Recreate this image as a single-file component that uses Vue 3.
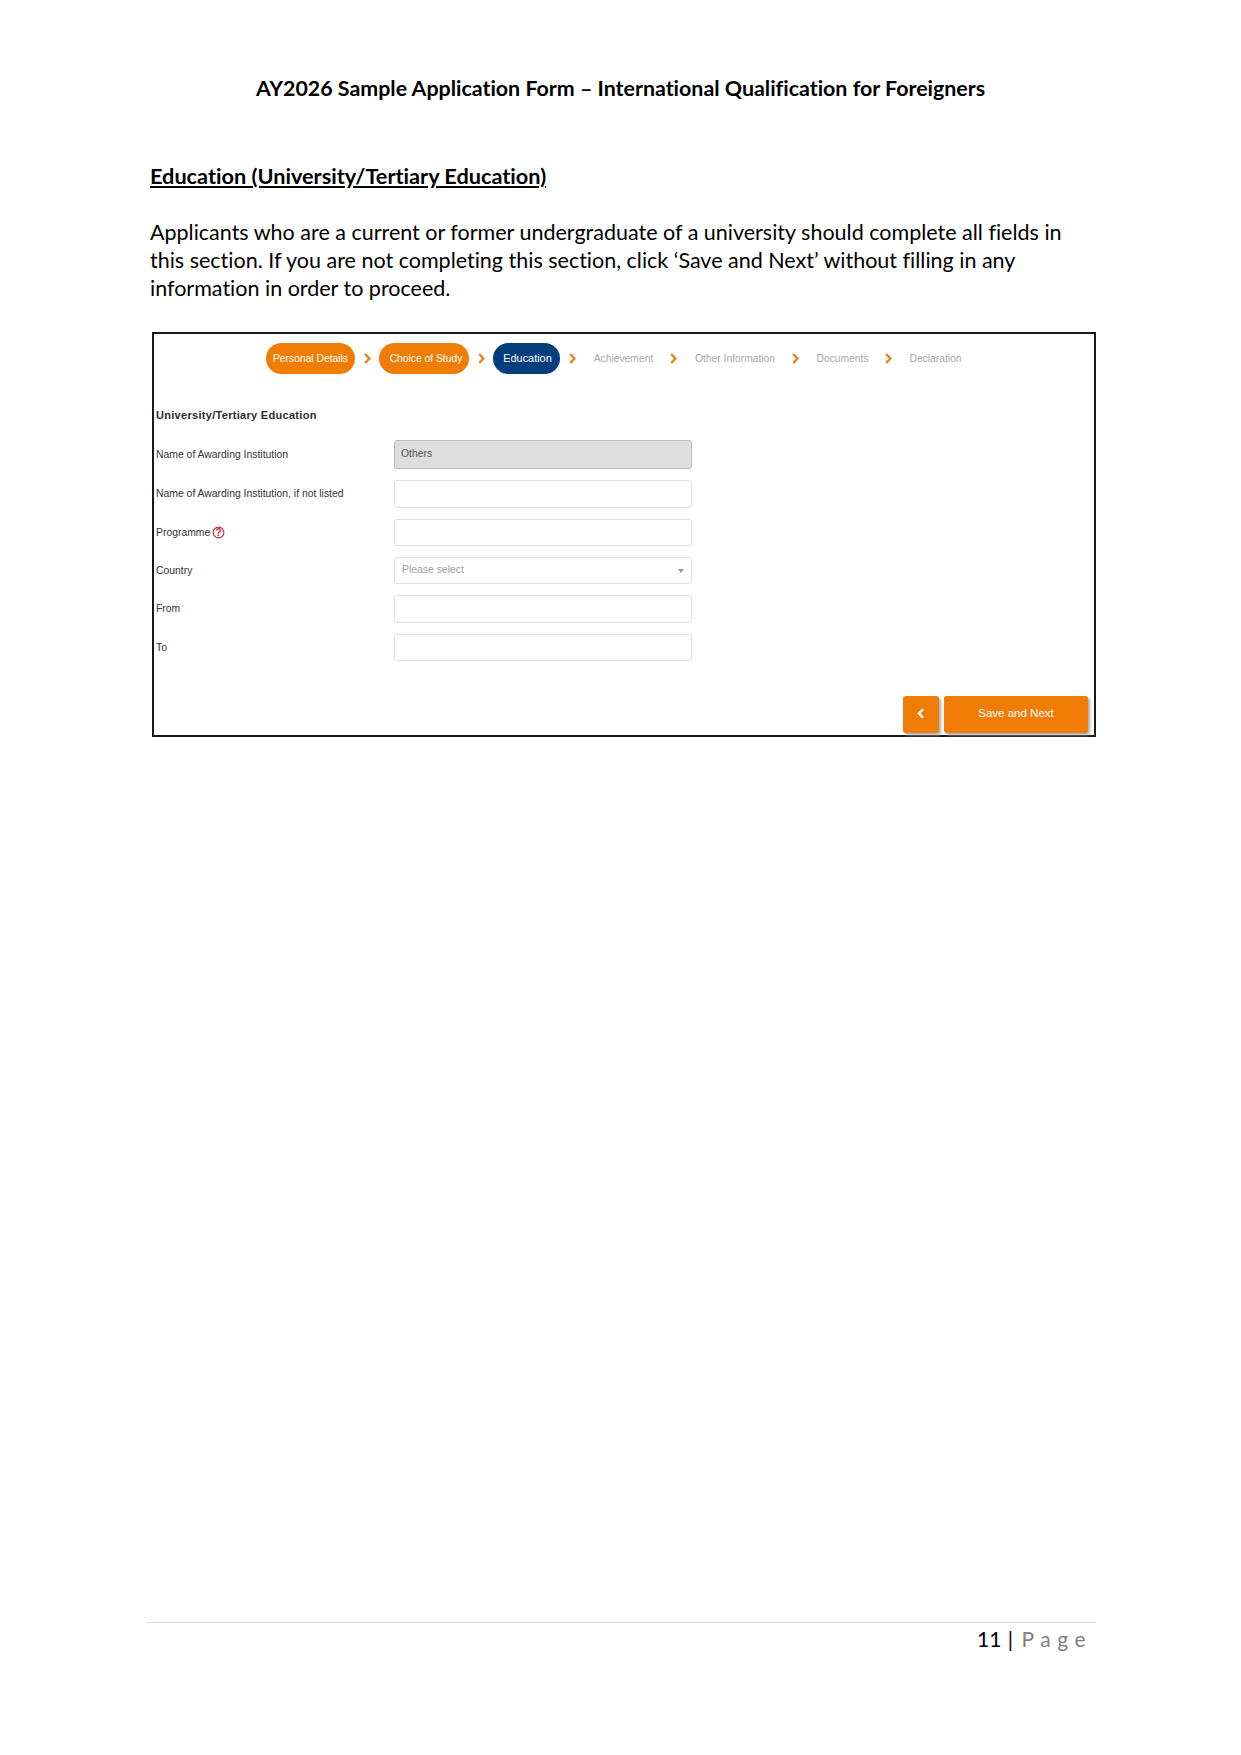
<script setup>
const steps = [
  { label: 'Personal Details', state: 'done', w: 89 },
  { label: 'Choice of Study', state: 'done', w: 90 },
  { label: 'Education', state: 'current', w: 67 },
  { label: 'Achievement', state: 'todo', w: 59 },
  { label: 'Other Information', state: 'todo', w: 80 },
  { label: 'Documents', state: 'todo', w: 51 },
  { label: 'Declaration', state: 'todo', w: 51 }
]

const rows = [
  { label: 'Name of Awarding Institution', h: 29, value: 'Others', kind: 'disabled' },
  { label: 'Name of Awarding Institution, if not listed', h: 28 },
  { label: 'Programme', h: 27, help: true },
  { label: 'Country', h: 27, kind: 'select', value: 'Please select' },
  { label: 'From', h: 28 },
  { label: 'To', h: 27 }
]
</script>

<template>
  <div class="page">
    <h1 class="doc-title">AY2026 Sample Application Form – International Qualification for Foreigners</h1>
    <h2 class="section">Education (University/Tertiary Education)</h2>
    <p class="intro">
      Applicants who are a current or former undergraduate of a university should complete all fields in<br>
      this section. If you are not completing this section, click ‘Save and Next’ without filling in any<br>
      information in order to proceed.
    </p>

    <div class="shot">
      <div class="steps">
        <template v-for="(s, i) in steps" :key="s.label">
          <span class="step" :class="s.state" :style="{ width: s.w + 'px' }">{{ s.label }}</span>
          <svg v-if="i < steps.length - 1" class="chev" width="7" height="11" viewBox="0 0 7 11">
            <path d="M1.2 1 L5.4 5.5 L1.2 10" fill="none" stroke="#e8811a" stroke-width="2.4" />
          </svg>
        </template>
      </div>

      <div class="form-title">University/Tertiary Education</div>

      <div class="rows">
        <div v-for="r in rows" :key="r.label" class="row">
          <div class="label">
            {{ r.label }}
            <svg v-if="r.help" class="help" width="13" height="13" viewBox="0 0 13 13">
              <circle cx="6.5" cy="6.5" r="5.4" fill="none" stroke="#d2232a" stroke-width="1.1" />
              <text x="6.5" y="10" text-anchor="middle" font-size="10" font-weight="700" fill="#d2232a">?</text>
            </svg>
          </div>
          <div class="field" :class="r.kind" :style="{ height: r.h + 'px' }">
            <span v-if="r.value">{{ r.value }}</span>
            <i v-if="r.kind === 'select'" class="caret"></i>
          </div>
        </div>
      </div>

      <div class="actions">
        <button class="btn back" type="button">
          <svg width="8" height="11" viewBox="0 0 8 11">
            <path d="M6 1.2 L2 5.5 L6 9.8" fill="none" stroke="#fff" stroke-width="2.4" />
          </svg>
        </button>
        <button class="btn save" type="button"><span>Save and Next</span></button>
      </div>
    </div>

    <div class="footer">
      <span class="num">11</span> <span class="bar">|</span> <span class="pg">Page</span>
    </div>
  </div>
</template>

<style scoped>
.page {
  width: 1241px;
  height: 1755px;
  box-sizing: border-box;
  padding: 75px 146px 0 150px;
  display: flex;
  flex-direction: column;
  font-family: Lato, "Liberation Sans", sans-serif;
  font-variant-ligatures: none;
  color: #000;
  background: #fff;
  position: relative;
}
.doc-title {
  margin: 0 4px 0 0;
  text-align: center;
  font-size: 21.4px;
  line-height: 26px;
  font-weight: 700;
  white-space: nowrap;
}
.section {
  margin: 62px 0 0;
  font-size: 21.7px;
  line-height: 26px;
  font-weight: 700;
  text-decoration: underline;
}
.intro {
  margin: 29px 0 0;
  font-size: 21.5px;
  line-height: 28px;
  white-space: nowrap;
}
.shot {
  margin: 30px 0 0 2px;
  width: 944px;
  height: 405px;
  box-sizing: border-box;
  border: 2px solid #1a1a1a;
  display: flex;
  flex-direction: column;
  font-family: "Liberation Sans", Arial, sans-serif;
}
.steps {
  display: flex;
  align-items: center;
  height: 31px;
  margin: 9px 0 0 112px;
}
.step {
  flex: none;
  height: 31px;
  display: flex;
  align-items: center;
  justify-content: center;
  font-size: 10.3px;
  padding-bottom: 1px;
  box-sizing: border-box;
  white-space: nowrap;
}
.step.done {
  background: #ef7d05;
  color: #fff;
  border-radius: 16px;
}
.step.done + .chev + .step.done {
  padding-left: 4px;
}
.step.current {
  background: #043e7d;
  color: #fff;
  border-radius: 16px;
  font-size: 10.9px;
  padding-left: 2px;
}
.step.todo {
  color: #a8a8a8;
  margin: 0 8px 0 10px;
}
.chev {
  flex: none;
  margin: 0 8px 0 9px;
}
.form-title {
  margin: 33px 0 0 2px;
  font-size: 11px;
  line-height: 16px;
  font-weight: 700;
  letter-spacing: 0.3px;
  color: #2b2b2b;
}
.rows {
  margin: 17px 0 0 2px;
  display: flex;
  flex-direction: column;
  gap: 11px;
}
.row {
  display: grid;
  grid-template-columns: 238px 298px;
  align-items: center;
}
.label {
  display: flex;
  align-items: center;
  gap: 2px;
  font-size: 10.4px;
  padding-bottom: 1px;
  color: #333;
}
.help {
  flex: none;
}
.field {
  box-sizing: border-box;
  border: 1px solid #e2e2e2;
  border-radius: 3px;
  background: #fff;
  display: flex;
  align-items: center;
  justify-content: space-between;
  padding: 0 7px 2px;
  font-size: 10.4px;
}
.field.disabled {
  background: #dedede;
  border-color: #bdbdbd;
  color: #555;
  padding-left: 6px;
}
.field.select {
  color: #a0a0a0;
}
.caret {
  width: 0;
  height: 0;
  border-left: 3px solid transparent;
  border-right: 3px solid transparent;
  border-top: 4px solid #9a9a9a;
  margin-top: 2px;
}
.actions {
  margin-top: auto;
  margin-bottom: 2px;
  margin-right: 6px;
  display: flex;
  justify-content: flex-end;
  gap: 5px;
}
.btn {
  height: 37px;
  border: 0;
  border-radius: 3px;
  background: #ef7d05;
  color: #fff;
  font-family: "Liberation Sans", Arial, sans-serif;
  font-size: 11.5px;
  box-shadow: 2px 2px 3px #a9a9a9;
  display: flex;
  align-items: center;
  justify-content: center;
  padding: 0 0 3px;
}
.back {
  width: 36px;
}
.save {
  width: 144px;
}
.footer {
  position: absolute;
  left: 147px;
  width: 949px;
  top: 1622px;
  box-sizing: border-box;
  border-top: 1px solid #dcdcdc;
  padding: 3px 4px 0 0;
  text-align: right;
  font-size: 21px;
  line-height: 26px;
}
.num {
  margin-right: 1px;
}
.bar {
  margin-right: 3px;
}
.pg {
  color: #7f7f7f;
  letter-spacing: 6.5px;
}
</style>

<style>
html, body { margin: 0; background: #fff; }
</style>
